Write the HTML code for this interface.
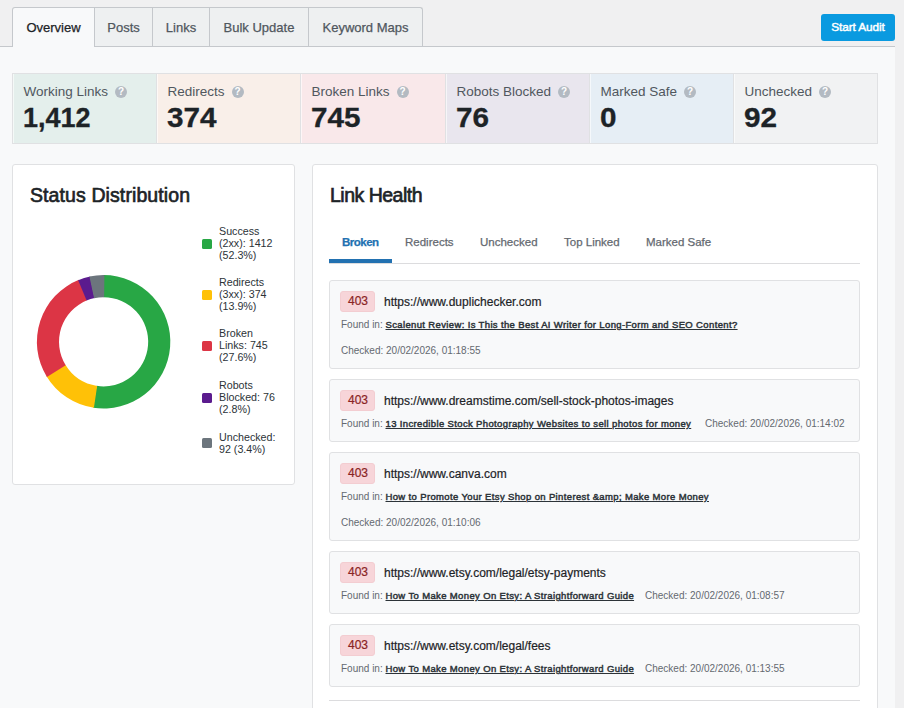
<!DOCTYPE html>
<html><head><meta charset="utf-8">
<style>
*{box-sizing:border-box;margin:0;padding:0}
html,body{width:904px;height:708px;overflow:hidden;background:#f0f0f1;font-family:"Liberation Sans",sans-serif;color:#1d2327}
.wrap{position:absolute;left:0;top:0;width:895px;height:708px}
.panel{position:absolute;left:0;top:46px;width:895px;height:662px;background:#f8f9fa;border-top:1px solid #c5c8cc}
.tab{position:absolute;top:7px;height:39px;border:1px solid #c5c8cc;border-bottom:none;background:#eef0f1;color:#50575e;font-size:13px;line-height:39px;text-align:center;-webkit-text-stroke:0.25px currentColor}
.tab.active{background:#f8f9fa;color:#1d2327;height:40px;z-index:2;border-top-left-radius:3px}
.btn{position:absolute;left:821px;top:13.5px;width:74px;height:27px;background:#0a9ae0;border-radius:3px;color:#fff;font-size:11.8px;font-weight:400;-webkit-text-stroke:0.45px #fff;letter-spacing:-0.1px;line-height:27px;text-align:center}
.stat{position:absolute;top:73px;height:71px;border:1px solid #e0e1e3;box-shadow:inset 1px 0 0 rgba(255,255,255,.6)}
.stat .lbl{position:absolute;left:10.5px;top:10px;font-size:13.5px;color:#50575e;white-space:nowrap}
.stat .q{display:inline-block;width:12px;height:12px;border-radius:50%;background:#b3bac2;color:#fff;font-size:10px;line-height:12px;text-align:center;font-weight:700;margin-left:7px;vertical-align:1px}
.stat .num{position:absolute;left:10px;top:28.5px;transform:scaleX(1.1);transform-origin:0 0;font-size:27px;font-weight:700;color:#1d2327;-webkit-text-stroke:0.3px #1d2327;letter-spacing:0}
.card{position:absolute;top:164px;background:#fff;border:1px solid #e0e1e3;border-radius:3px}
.h2{position:absolute;font-size:19.5px;font-weight:400;letter-spacing:0px;-webkit-text-stroke:0.65px #1d2327;color:#1d2327;white-space:nowrap}
.leg{position:absolute;left:219px;font-size:10.7px;line-height:12.1px;color:#2c3338;width:62px}
.sq{position:absolute;left:-17px;width:10px;height:10px;border-radius:1.5px}
.ltab{position:absolute;top:235.5px;font-size:11.5px;color:#646970;white-space:nowrap;-webkit-text-stroke:0.25px currentColor}
.item{position:absolute;left:329px;width:531px;background:#f8f9fa;border:1px solid #e0e1e3;border-radius:3px}
.badge{position:absolute;left:10px;top:10px;width:35px;height:21px;background:#f7d5d9;border:1px solid #f3cdd1;border-radius:3px;color:#8a2424;font-size:12px;-webkit-text-stroke:0.2px #8a2424;padding-left:1px;line-height:19px;text-align:center}
.url{position:absolute;left:54px;top:14px;font-size:12px;color:#1d2327;white-space:nowrap;-webkit-text-stroke:0.2px #1d2327}
.found{position:absolute;left:11px;font-size:10px;color:#646970;white-space:nowrap}
.found a{color:#2c3338;font-weight:400;font-size:9.5px;letter-spacing:0.36px;-webkit-text-stroke:0.45px #2c3338;text-decoration:underline;text-decoration-thickness:1px;text-underline-offset:1px}
.chk{position:absolute;font-size:10px;color:#646970;white-space:nowrap}
</style></head><body>
<div class="wrap">
  <div class="panel"></div>
  <div class="tab active" style="left:12px;width:83px">Overview</div>
  <div class="tab" style="left:94px;width:59px">Posts</div>
  <div class="tab" style="left:152px;width:58px">Links</div>
  <div class="tab" style="left:209px;width:100px">Bulk Update</div>
  <div class="tab" style="left:308px;width:115px;border-top-right-radius:3px">Keyword Maps</div>
  <div class="btn">Start Audit</div>

  <div class="stat" style="left:12px;width:145px;background:#e4efec"><div class="lbl">Working Links<span class="q">?</span></div><div class="num" style="transform:none">1,412</div></div>
  <div class="stat" style="left:156px;width:145px;background:#f9efe9"><div class="lbl">Redirects<span class="q">?</span></div><div class="num">374</div></div>
  <div class="stat" style="left:300px;width:146px;background:#f9e8ea"><div class="lbl">Broken Links<span class="q">?</span></div><div class="num">745</div></div>
  <div class="stat" style="left:445px;width:145px;background:#e9e6ee"><div class="lbl">Robots Blocked<span class="q">?</span></div><div class="num">76</div></div>
  <div class="stat" style="left:589px;width:145px;background:#e6eef5"><div class="lbl">Marked Safe<span class="q">?</span></div><div class="num">0</div></div>
  <div class="stat" style="left:733px;width:145px;background:#f1f2f3"><div class="lbl">Unchecked<span class="q">?</span></div><div class="num">92</div></div>

  <div class="card" style="left:12px;width:283px;height:321px">
  </div>
  <div class="h2" style="left:30px;top:184px;letter-spacing:0.1px">Status Distribution</div>
  <svg style="position:absolute;left:0;top:0" width="300" height="500">
    <g transform="translate(103.6,341.8)"><path fill="#28a745" d="M0.00 -66.70A66.7 66.7 0 1 1 -10.46 65.87L-7.00 44.05A44.6 44.6 0 1 0 0.00 -44.60Z"/><path fill="#ffc107" d="M-9.67 66.00A66.7 66.7 0 0 1 -57.12 34.44L-38.19 23.03A44.6 44.6 0 0 0 -6.47 44.13Z"/><path fill="#dc3545" d="M-56.70 35.13A66.7 66.7 0 0 1 -24.68 -61.96L-16.51 -41.43A44.6 44.6 0 0 0 -37.91 23.49Z"/><path fill="#5b1b8e" d="M-25.43 -61.66A66.7 66.7 0 0 1 -13.39 -65.34L-8.96 -43.69A44.6 44.6 0 0 0 -17.00 -41.23Z"/><path fill="#6c757d" d="M-14.18 -65.18A66.7 66.7 0 0 1 0.80 -66.70L0.54 -44.60A44.6 44.6 0 0 0 -9.48 -43.58Z"/></g>
  </svg>
  <div class="leg" style="top:225px"><span class="sq" style="top:14px;background:#28a745"></span>Success (2xx): 1412 (52.3%)</div>
  <div class="leg" style="top:276px"><span class="sq" style="top:14px;background:#ffc107"></span>Redirects (3xx): 374 (13.9%)</div>
  <div class="leg" style="top:327px"><span class="sq" style="top:14px;background:#dc3545"></span>Broken Links: 745 (27.6%)</div>
  <div class="leg" style="top:379px"><span class="sq" style="top:14px;background:#5b1b8e"></span>Robots Blocked: 76 (2.8%)</div>
  <div class="leg" style="top:431px"><span class="sq" style="top:7px;background:#6c757d"></span>Unchecked: 92 (3.4%)</div>

  <div class="card" style="left:312px;width:566px;height:560px"></div>
  <div class="h2" style="left:330px;top:184px;letter-spacing:-0.5px">Link Health</div>
  <div style="position:absolute;left:329px;top:263px;width:531px;height:1px;background:#dcdcde"></div>
  <div style="position:absolute;left:329px;top:259px;width:63px;height:4px;background:#2271b1"></div>
  <div class="ltab" style="left:342px;color:#2271b1;font-weight:700;letter-spacing:-0.5px">Broken</div>
  <div class="ltab" style="left:405px">Redirects</div>
  <div class="ltab" style="left:480px">Unchecked</div>
  <div class="ltab" style="left:564px">Top Linked</div>
  <div class="ltab" style="left:646px">Marked Safe</div>

  <div class="item" style="top:280px;height:89px">
    <div class="badge">403</div><div class="url">https://www.duplichecker.com</div>
    <div class="found" style="top:38px">Found in: <a>Scalenut Review: Is This the Best AI Writer for Long-Form and SEO Content?</a></div>
    <div class="chk" style="left:11px;top:64px">Checked: 20/02/2026, 01:18:55</div>
  </div>
  <div class="item" style="top:379px;height:63px">
    <div class="badge">403</div><div class="url">https://www.dreamstime.com/sell-stock-photos-images</div>
    <div class="found" style="top:38px">Found in: <a>13 Incredible Stock Photography Websites to sell photos for money</a></div>
    <div class="chk" style="left:375px;top:38px">Checked: 20/02/2026, 01:14:02</div>
  </div>
  <div class="item" style="top:452px;height:89px">
    <div class="badge">403</div><div class="url">https://www.canva.com</div>
    <div class="found" style="top:38px">Found in: <a>How to Promote Your Etsy Shop on Pinterest &amp;amp; Make More Money</a></div>
    <div class="chk" style="left:11px;top:64px">Checked: 20/02/2026, 01:10:06</div>
  </div>
  <div class="item" style="top:551px;height:63px">
    <div class="badge">403</div><div class="url">https://www.etsy.com/legal/etsy-payments</div>
    <div class="found" style="top:38px">Found in: <a>How To Make Money On Etsy: A Straightforward Guide</a></div>
    <div class="chk" style="left:315px;top:38px">Checked: 20/02/2026, 01:08:57</div>
  </div>
  <div class="item" style="top:624px;height:63px">
    <div class="badge">403</div><div class="url">https://www.etsy.com/legal/fees</div>
    <div class="found" style="top:38px">Found in: <a>How To Make Money On Etsy: A Straightforward Guide</a></div>
    <div class="chk" style="left:315px;top:38px">Checked: 20/02/2026, 01:13:55</div>
  </div>
  <div style="position:absolute;left:329px;top:700px;width:531px;height:1px;background:#dcdcde"></div>
</div>
</body></html>
